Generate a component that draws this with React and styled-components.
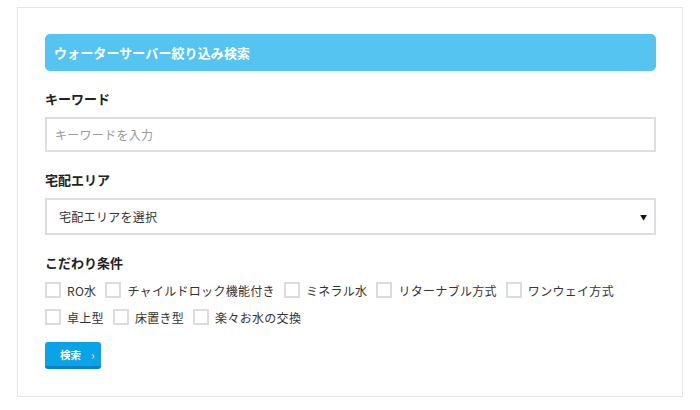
import styled, { createGlobalStyle } from "styled-components";

const Global = createGlobalStyle`
  html, body {
    margin: 0;
    padding: 0;
    background: #fff;
  }
  body {
    font-family: "Noto Sans CJK JP", "Noto Sans", sans-serif;
    color: #333;
  }
  * {
    box-sizing: border-box;
  }
`;

const Card = styled.section`
  margin: 7px 0 0 17px;
  width: 666px;
  height: 390px;
  border: 1px solid #e6e6e6;
  padding: 26px 26px 0 27px;
`;

const Heading = styled.h2`
  margin: 0;
  height: 37px;
  display: flex;
  align-items: center;
  padding-left: 9px;
  background: #55c4f1;
  border-radius: 5px;
  color: #fff;
  font-size: 13px;
  font-weight: bold;
  letter-spacing: 0.1px;
`;

const FieldLabel = styled.div`
  margin-top: 18px;
  line-height: 20px;
  font-size: 13px;
  font-weight: bold;
  color: #222;
`;

const TextInput = styled.input`
  display: block;
  margin-top: 8px;
  width: 100%;
  height: 35px;
  border: 2px solid #dedede;
  padding: 0 8px;
  font-family: inherit;
  font-size: 12px;
  letter-spacing: 0.3px;
  outline: none;

  &::placeholder {
    color: #9a9a9a;
  }
`;

const SelectWrap = styled.div`
  position: relative;
  margin-top: 8px;

  &::after {
    content: "▼";
    position: absolute;
    right: 9px;
    top: 50%;
    transform: translateY(-50%);
    font-size: 7px;
    color: #111;
    pointer-events: none;
  }
`;

const AreaSelect = styled.select`
  display: block;
  width: 100%;
  height: 37px;
  border: 2px solid #dedede;
  border-radius: 0;
  background: #fff;
  appearance: none;
  padding: 0 12px;
  font-family: inherit;
  font-size: 12px;
  letter-spacing: 0.3px;
  color: #333;
  outline: none;
`;

const Options = styled.div`
  margin-top: 4px;
  display: flex;
  flex-wrap: wrap;
  row-gap: 1px;
`;

const Option = styled.label`
  display: flex;
  align-items: center;
  height: 26px;
  gap: 6px;
  margin-right: 9px;
  font-size: 12px;
  letter-spacing: 0.3px;
  color: #333;
`;

const CheckBox = styled.span`
  width: 16px;
  height: 16px;
  border: 2px solid #dcdcdc;
  background: #fff;
`;

const SearchButton = styled.button`
  margin-top: 12px;
  width: 56px;
  height: 27px;
  border: 0;
  border-bottom: 3px solid #0785c2;
  border-radius: 3px;
  background: #09a3e8;
  color: #fff;
  font-family: inherit;
  font-size: 10.5px;
  font-weight: bold;
  display: flex;
  align-items: center;
  padding: 0 0 0 15px;
  gap: 10px;
  cursor: pointer;
`;

const Chevron = styled.span`
  font-size: 12px;
  font-weight: normal;
  opacity: 0.85;
`;

const conditions = [
  "RO水",
  "チャイルドロック機能付き",
  "ミネラル水",
  "リターナブル方式",
  "ワンウェイ方式",
  "卓上型",
  "床置き型",
  "楽々お水の交換",
];

const App = () => {
  return (
    <>
      <Global />
      <Card>
        <Heading>ウォーターサーバー絞り込み検索</Heading>

        <FieldLabel>キーワード</FieldLabel>
        <TextInput placeholder="キーワードを入力" />

        <FieldLabel>宅配エリア</FieldLabel>
        <SelectWrap>
          <AreaSelect defaultValue="">
            <option value="">宅配エリアを選択</option>
          </AreaSelect>
        </SelectWrap>

        <FieldLabel>こだわり条件</FieldLabel>
        <Options>
          {conditions.map((c) => (
            <Option key={c}>
              <CheckBox />
              {c}
            </Option>
          ))}
        </Options>

        <SearchButton>
          検索
          <Chevron>›</Chevron>
        </SearchButton>
      </Card>
    </>
  );
};

export default App;
